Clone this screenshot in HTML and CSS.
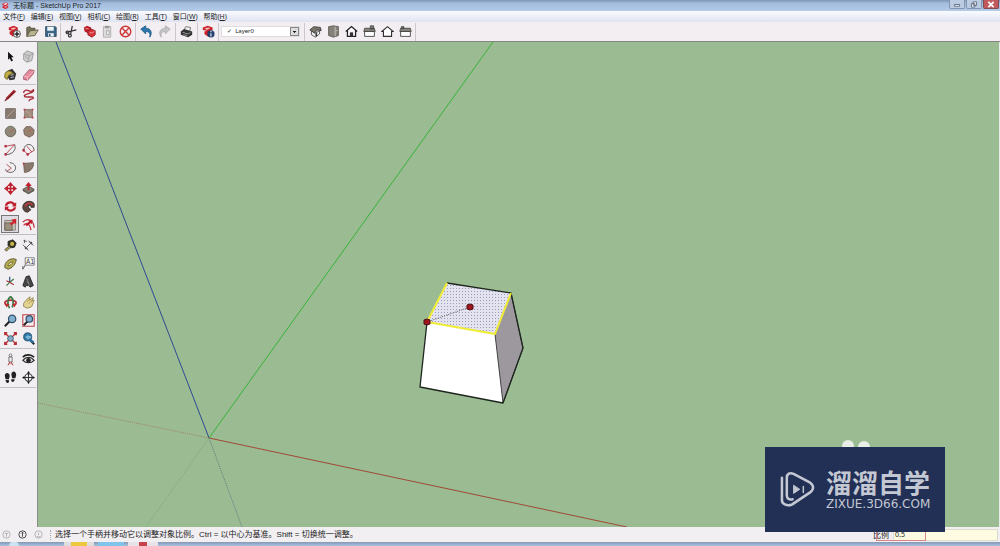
FILE: index.html
```html
<!DOCTYPE html>
<html lang="zh-CN">
<head>
<meta charset="utf-8">
<title>无标题 - SketchUp Pro 2017</title>
<link rel="stylesheet" href="styles.css">
</head>
<body>
<div class="app">
  <header class="titlebar">
    <svg class="app-icon" viewBox="0 0 16 16"><path d="M1 4l7-3 6 2v3l-5 2 5 1v4l-6 3-7-3v-3l4-1-4-2z" fill="#d3202c"/><path d="M4 5l5-2 3 1-5 2zM5 11l4 1 3-1" fill="#fff" stroke="#fff"/></svg>
    <h1 class="title">无标题 - SketchUp Pro 2017</h1>
    <div class="window-buttons">
      <button class="win" aria-label="最小化"><svg viewBox="0 0 16 8"><path d="M5 4h6v2H5z" fill="#fff" stroke="#56647a"/></svg></button>
      <button class="win" aria-label="还原"><svg viewBox="0 0 16 8"><path d="M7 1h4v4H7zM5 3h4v4H5z" fill="#fff" stroke="#56647a"/></svg></button>
      <button class="win win-close" aria-label="关闭"><svg viewBox="0 0 16 8"><path d="M5 1l6 6M11 1L5 7" stroke="#fff" stroke-width="2"/></svg></button>
    </div>
  </header>
  <nav class="menubar">
    <button class="menu">文件(<u>F</u>)</button><button class="menu">编辑(<u>E</u>)</button><button class="menu">视图(<u>V</u>)</button><button class="menu">相机(<u>C</u>)</button><button class="menu">绘图(<u>R</u>)</button><button class="menu">工具(<u>T</u>)</button><button class="menu">窗口(<u>W</u>)</button><button class="menu">帮助(<u>H</u>)</button>
  </nav>
  <div class="toolbar">
    <div class="group">
      <button class="tool" aria-label="新建"><svg viewBox="0 0 16 16"><path d="M1 3l6-2 5 2v3l-3 1v6l-3 1-4-3V8l3-1-4-1z" fill="#c9222b"/><path d="M3 4l5-1 2 1-4 2z" fill="#f3b9b4"/><circle cx="11" cy="11" r="4.3" fill="#fff" stroke="#333"/><path d="M11 8v6M8 11h6" stroke="#222" stroke-width="1.8"/></svg></button>
      <button class="tool" aria-label="打开"><svg viewBox="0 0 16 16"><path d="M1 14V3l4-1 1 2h5v3" fill="#77735a" stroke="#4d4b3c"/><path d="M1 14l4-7 10-1-4 7z" fill="#b8b48f" stroke="#55533f"/></svg></button>
      <button class="tool" aria-label="保存"><svg viewBox="0 0 16 16"><path d="M2 2h12l1 1v11H2z" fill="#3c6788" stroke="#24425e"/><path d="M4 2h8v5H4zM5 10h7v4H5z" fill="#eef3f6"/><path d="M6 11h2v3H6z" fill="#355a76"/></svg></button>
    </div>
    <div class="group">
      <button class="tool" aria-label="剪切"><svg viewBox="0 0 16 16" fill="none" stroke="#333" stroke-width="1.5"><path d="M9 1L7 11M1 9l13-3"/><circle cx="6" cy="13" r="1.8"/><circle cx="3" cy="9" r="1.6"/></svg></button>
      <button class="tool" aria-label="复制"><svg viewBox="0 0 16 16"><path d="M1 3l4-2 5 2v3l-2 2-2 2-4-2z" fill="#b91f28"/><path d="M6 8l4-3 5 2v5l-4 3-5-3z" fill="#d7303a" stroke="#8d1620"/><path d="M3 4l4 1M8 9l3 1 3-2" stroke="#f4b2ad" fill="none"/></svg></button>
      <button class="tool" aria-label="粘贴"><svg viewBox="0 0 16 16"><path d="M3 2h9v13H3z" fill="#ddd" stroke="#aaa"/><path d="M5 1h5v3H5z" fill="#999"/><path d="M7 7h3v5H7z" fill="#fff" stroke="#999"/></svg></button>
      <button class="tool" aria-label="删除"><svg viewBox="0 0 16 16" fill="none" stroke="#cd3434" stroke-width="1.7"><circle cx="8" cy="8" r="6.5"/><path d="M4 4l8 8M12 4l-8 8"/></svg></button>
    </div>
    <div class="group group-wide">
      <button class="tool" aria-label="撤销"><svg viewBox="0 0 16 16"><path d="M1 5l6-4v3c6 0 9 5 5 11 1-5-1-7-5-7v3z" fill="#2d77ad" stroke="#1e557e"/></svg></button>
      <button class="tool" aria-label="重做"><svg viewBox="0 0 16 16"><path d="M15 5L9 1v3C3 4 0 9 4 15c-1-5 1-7 5-7v3z" fill="#c5c5c7" stroke="#aaa"/></svg></button>
    </div>
    <div class="group group-wide">
      <button class="tool" aria-label="打印"><svg viewBox="0 0 16 16"><path d="M5 6l2-4 6 1-1 5z" fill="#eee" stroke="#666"/><path d="M1 8l4-3 10 3v4l-5 3-9-3z" fill="#333"/><path d="M3 9l7 2 3-2M4 12l5 1" stroke="#aaa" fill="none"/></svg></button>
    </div>
    <div class="group">
      <button class="tool" aria-label="模型信息"><svg viewBox="0 0 16 16"><path d="M1 3l6-2 6 2v3l-3 1v6l-3 1-4-3V8l3-1-5-1z" fill="#c9222b"/><path d="M3 4l5-1 2 1-4 2z" fill="#f3b9b4"/><circle cx="11" cy="11" r="4.4" fill="#243f6b"/><path d="M11 10v4M11 7.5v1.5" stroke="#fff" stroke-width="1.3"/></svg></button>
    </div>
    <div class="group">
      <select class="layer" aria-label="图层"><option>✓ &nbsp;Layer0</option></select>
    </div>
    <div class="group group-views">
      <button class="tool" aria-label="等轴"><svg viewBox="0 0 16 16"><path d="M3 7l5 3 5-3v4l-5 4-5-3z" fill="#eee" stroke="#444"/><path d="M1 6l5-4 8 1 1 4-5-1-3 4z" fill="#77746a" stroke="#333"/><path d="M9 10v4" stroke="#333" stroke-width="2"/></svg></button>
      <button class="tool" aria-label="俯视"><svg viewBox="0 0 16 16"><path d="M2 2l6-1 6 1v11l-6 2-6-2z" fill="#85827a" stroke="#55534c"/><path d="M10 2v12M11 7h2" stroke="#ccc"/></svg></button>
      <button class="tool" aria-label="前视"><svg viewBox="0 0 16 16"><path d="M1 8l7-6 7 6M3 7v7h10V7" fill="#fff" stroke="#222" stroke-width="1.6"/><path d="M6 9h4v5H6z" fill="#333"/></svg></button>
      <button class="tool" aria-label="右视"><svg viewBox="0 0 16 16"><path d="M2 8h12v6H2z" fill="#fff" stroke="#333"/><path d="M2 4h12l1 4H1zM9 1h4v4H9z" fill="#85827a" stroke="#444"/></svg></button>
      <button class="tool" aria-label="后视"><svg viewBox="0 0 16 16"><path d="M1 8l7-6 7 6h-2v6H3V8z" fill="#fff" stroke="#333" stroke-width="1.4"/></svg></button>
      <button class="tool" aria-label="左视"><svg viewBox="0 0 16 16"><path d="M2 8h12v6H2z" fill="#fff" stroke="#333"/><path d="M2 4h12l1 4H1zM3 2h3v2H3z" fill="#85827a" stroke="#444"/></svg></button>
    </div>
  </div>
  <main class="workspace">
    <aside class="palette">
      <div class="tools">
        <button class="tool" aria-label="选择"><svg viewBox="0 0 16 16"><path d="M5 2v10l2-2 2 4 2-1-2-4h3z" fill="#111"/></svg></button>
        <button class="tool" aria-label="制作组件"><svg viewBox="0 0 16 16"><path d="M2 5l4-4 8 3-2 9-6 2-4-3z" fill="#ccc" stroke="#909090"/><path d="M2 5l7 2 5-3M9 7l-2 8M4 8l3 2" fill="none" stroke="#999"/></svg></button>
        <button class="tool" aria-label="材质"><svg viewBox="0 0 16 16"><path d="M5 3l5-2 5 6-2 7-6 1-4-6z" fill="#333"/><path d="M1 12C0 5 4 3 8 4l4 3C7 7 5 9 4 14z" fill="#c2ae45" stroke="#665c20"/><path d="M8 9l4-1M8 12l4-1" stroke="#aab" stroke-width="1.5"/></svg></button>
        <button class="tool" aria-label="擦除"><svg viewBox="0 0 16 16"><path d="M2 10L9 2l6 1-1 4-7 8-5-1z" fill="#e48a9c" stroke="#a05064"/><path d="M2 10l5 1 8-8M7 11v4" fill="none" stroke="#f6c5ce"/></svg></button>
      </div>
      <div class="tools">
        <button class="tool" aria-label="直线"><svg viewBox="0 0 16 16"><path d="M1 15l2-5 9-9 3 2-9 9z" fill="#a92b32"/><path d="M4 12l9-9M1 15l2-3" stroke="#4b1519"/></svg></button>
        <button class="tool" aria-label="手绘线"><svg viewBox="0 0 16 16"><path d="M2 5c0-4 4-4 6-3s5 1 6-1c2 4-9 4-11 7-1 4 11 0 11 3 0 2-6 1-5 4" fill="none" stroke="#a62a34" stroke-width="1.7"/></svg></button>
        <button class="tool" aria-label="矩形"><svg viewBox="0 0 16 16"><path d="M2 2h12v12H2z" fill="#897a70" stroke="#6a625c"/><path d="M3 13L13 3" stroke="#c9a9a2"/></svg></button>
        <button class="tool" aria-label="旋转矩形"><svg viewBox="0 0 16 16"><path d="M3 3h10v10H3z" fill="#a08b7c" stroke="#82756b"/><path d="M2 2h2v2H2zM12 2h2v2h-2zM2 12h2v2H2zM12 12h2v2h-2z" fill="#bf3540"/><path d="M4 6c4-1 6 2 6 6" fill="none" stroke="#c8aaa0"/></svg></button>
        <button class="tool" aria-label="圆"><svg viewBox="0 0 16 16"><circle cx="8" cy="8" r="6.5" fill="#908677" stroke="#5d6050"/><path d="M8 8l4-2" stroke="#bd5a55"/></svg></button>
        <button class="tool" aria-label="多边形"><svg viewBox="0 0 16 16"><path d="M5 2h6l4 4-1 6-5 3-6-3-1-6z" fill="#96816f" stroke="#715d52"/><path d="M8 8l4-2" stroke="#bd5a55"/></svg></button>
        <button class="tool" aria-label="圆弧"><svg viewBox="0 0 16 16" fill="none" stroke="#b02f3a"><path d="M2 4l11-2M2 14l11-12"/><path d="M13 2c3 6-3 13-11 12" stroke="#444"/><path d="M1 3h2v2H1zM1 13h2v2H1z" fill="#b02f3a"/></svg></button>
        <button class="tool" aria-label="两点圆弧"><svg viewBox="0 0 16 16" fill="none" stroke="#444"><path d="M2 9c1-10 12-9 13 0"/><path d="M2 9l5 5 8-5M6 4l6 7" stroke="#b02f3a"/><path d="M1 8h2v2H1zM6 13h2v2H6z" fill="#b02f3a" stroke="#b02f3a"/></svg></button>
        <button class="tool" aria-label="三点圆弧"><svg viewBox="0 0 16 16" fill="none" stroke="#444"><path d="M7 2c10 1 9 12 1 12-4 0-6-2-6-4"/><path d="M3 4l6 5-6 4" stroke="#b02f3a"/></svg></button>
        <button class="tool" aria-label="扇形"><svg viewBox="0 0 16 16"><path d="M2 3l12-1c1 6-4 12-11 12z" fill="#8b7a6b" stroke="#665b50"/><path d="M1 2h2v2H1z" fill="#b02f3a"/></svg></button>
      </div>
      <div class="tools">
        <button class="tool" aria-label="移动"><svg viewBox="0 0 16 16"><path d="M8 0l4 5H9v2h2V4l5 4-5 4V9H9v2h3l-4 5-4-5h3V9H5v3L0 8l5-4v3h2V5H4z" fill="#bf202d"/></svg></button>
        <button class="tool" aria-label="推拉"><svg viewBox="0 0 16 16"><path d="M1 9l7-4 7 4-7 5z" fill="#887d70" stroke="#504a43"/><path d="M1 9v2l7 4 7-4V9l-7 5z" fill="#5c564f"/><path d="M8 0l4 5H9v5H7V5H4z" fill="#c3202d"/></svg></button>
        <button class="tool" aria-label="旋转"><svg viewBox="0 0 16 16"><path d="M1 7c1-6 9-7 12-3l2-1v5h-5l1-2C9 3 5 4 4 7zM15 9c-1 6-9 7-12 3l-2 1V8h5l-1 2c2 3 6 2 7-1z" fill="#bf202d"/></svg></button>
        <button class="tool" aria-label="路径跟随"><svg viewBox="0 0 16 16"><path d="M1 9C1 0 14 0 15 5v4h-4V7c-2-1-4 1-3 2l3 3-4 3c-4 0-6-3-6-6z" fill="#5b4640" stroke="#382c29"/><path d="M4 8c1-5 7-5 9-2" fill="none" stroke="#bb3940" stroke-width="2"/></svg></button>
        <button class="tool tool-active" aria-label="缩放" aria-pressed="true"><svg viewBox="0 0 16 16"><path d="M1 3h13v12H1z" fill="#c9c3b4" stroke="#777"/><path d="M1 6h9v9H1z" fill="#9c907e" stroke="#665d50"/><path d="M15 1v7l-2-2-4 3-2-2 4-3-2-2z" fill="#cf222d"/></svg></button>
        <button class="tool" aria-label="偏移"><svg viewBox="0 0 16 16"><path d="M1 5c6-6 13-3 14 7M2 9c3-4 8-2 9 6" fill="none" stroke="#bf2d36" stroke-width="1.5"/><path d="M13 2l-6 1 2 1-5 4 2 2 5-4 1 2z" fill="#bf202d"/></svg></button>
      </div>
      <div class="tools">
        <button class="tool" aria-label="卷尺"><svg viewBox="0 0 16 16"><path d="M5 3l6-2 4 4-2 5-5 1-3-3z" fill="#363525" stroke="#222"/><circle cx="10" cy="6" r="2.5" fill="#c7b848"/><path d="M6 9l-5 4 2 2 5-5" fill="#b3a548" stroke="#444"/></svg></button>
        <button class="tool" aria-label="尺寸"><svg viewBox="0 0 16 16" fill="none" stroke="#444"><path d="M4 12l8-8M1 7l7 7M8 2l6 6M2 2l4 1M3 1v4"/><path d="M4 9v3h3M9 4h3v3"/></svg></button>
        <button class="tool" aria-label="量角器"><svg viewBox="0 0 16 16"><path d="M1 13C0 6 8 0 15 3c0 5-5 11-10 12z" fill="#b5ab52" stroke="#4e4a25"/><path d="M5 11c0-3 3-5 6-5-1 3-3 4-6 5z" fill="#eee8b0" stroke="#666030"/></svg></button>
        <button class="tool" aria-label="文字"><svg viewBox="0 0 16 16"><path d="M4 1h11v9H4z" fill="#fff" stroke="#666"/><path d="M4 10l-3 5v-4" fill="none" stroke="#444"/><text x="5" y="9" class="glyph">A1</text></svg></button>
        <button class="tool" aria-label="轴"><svg viewBox="0 0 16 16" fill="none"><path d="M7 9V2" stroke="#345588" stroke-width="1.5"/><path d="M7 9l5-4M7 9l-4 4" stroke="#367c42" stroke-width="1.5"/><path d="M7 9l5 3M7 9L3 7" stroke="#a83538" stroke-width="1.5"/></svg></button>
        <button class="tool" aria-label="三维文字"><svg viewBox="0 0 16 16"><path d="M5 2l4-1 5 12-4 2-2-2H5l-1 2-3-2z" fill="#454545" stroke="#222"/><path d="M6 4l3 9M6 9h3" stroke="#888"/></svg></button>
      </div>
      <div class="tools">
        <button class="tool" aria-label="环绕观察"><svg viewBox="0 0 16 16" fill="none"><path d="M3 11C-1 8 2 5 8 5s9 3 5 6" stroke="#bf3035" stroke-width="2.2"/><path d="M7 15C4 12 4 3 8 1c4 2 4 9 2 13" stroke="#3c7947" stroke-width="2.2"/><path d="M1 9l6 1-4 4zM15 9l-5 1 3 4z" fill="#bf3035"/></svg></button>
        <button class="tool" aria-label="平移"><svg viewBox="0 0 16 16"><path d="M2 9l4-5 4-3-1 4 5-3-2 4 3-1-3 8-5 2-5-2z" fill="#e4d491" stroke="#8b7f48"/><path d="M6 7l4-3M8 9l5-3" stroke="#a99954"/></svg></button>
        <button class="tool" aria-label="缩放视图"><svg viewBox="0 0 16 16"><path d="M7 9l-6 6" stroke="#222" stroke-width="2.5"/><circle cx="10" cy="6" r="4.5" fill="#80afd0" stroke="#344e68" stroke-width="1.5"/></svg></button>
        <button class="tool" aria-label="缩放窗口"><svg viewBox="0 0 16 16"><path d="M1 1h14v14H1z" fill="none" stroke="#c34248" stroke-width="1.3"/><path d="M7 9l-5 5" stroke="#222" stroke-width="2.5"/><circle cx="9" cy="6" r="4" fill="#80afd0" stroke="#344e68" stroke-width="1.5"/></svg></button>
        <button class="tool" aria-label="充满视窗"><svg viewBox="0 0 16 16"><path d="M1 1l5 5M15 1l-5 5M1 15l5-5M15 15l-5-5M1 4V1h3M12 1h3v3M1 12v3h3M12 15h3v-3" fill="none" stroke="#b92731" stroke-width="1.7"/><circle cx="8" cy="8" r="3.5" fill="#82aac4" stroke="#344e68"/></svg></button>
        <button class="tool" aria-label="上一个"><svg viewBox="0 0 16 16"><path d="M9 9l6 6" stroke="#222" stroke-width="2.5"/><circle cx="7" cy="6" r="5" fill="#2f75a5" stroke="#24506f"/><path d="M4 6l4-3v2h3v3H8v2z" fill="#7bb4d6"/><path d="M9 9l5 4" stroke="#2970a1" stroke-width="3"/></svg></button>
      </div>
      <div class="tools">
        <button class="tool" aria-label="定位相机"><svg viewBox="0 0 16 16"><circle cx="8" cy="3" r="1.7" fill="#fff" stroke="#555"/><path d="M6 5h4v6H6z" fill="#eee" stroke="#666"/><path d="M7 11l-2 4M9 11l2 4M5 15l3-3 3 3" stroke="#b73a3e" fill="none"/></svg></button>
        <button class="tool" aria-label="绕轴旋转"><svg viewBox="0 0 16 16"><path d="M1 5c4-4 10-3 14 0" fill="none" stroke="#222" stroke-width="2"/><path d="M1 9c4-5 10-5 14 0-4 4-10 4-14 0z" fill="#ddd" stroke="#222" stroke-width="1.3"/><circle cx="8" cy="9" r="2.8" fill="#222"/></svg></button>
        <button class="tool" aria-label="漫游"><svg viewBox="0 0 16 16"><path d="M1 6c0-5 6-4 6 0l-1 4H2zM2 11h4c1 5-4 5-4 0zM9 4c1-5 6-4 6 1l-1 4h-4zM9 10h4c0 5-5 4-4 0z" fill="#222"/></svg></button>
        <button class="tool" aria-label="剖切面"><svg viewBox="0 0 16 16"><circle cx="8" cy="8" r="4.5" fill="none" stroke="#333" stroke-width="1.3"/><path d="M8 1v14M1 8h14" stroke="#333" stroke-width="1.3"/><path d="M8 0l2 3H6zM8 16l2-3H6zM0 8l3-2v4zM16 8l-3-2v4z" fill="#222"/></svg></button>
      </div>
    </aside>
    <section class="viewport">
      <svg class="scene" viewBox="38 42 962 485" preserveAspectRatio="xMinYMin slice" role="img" aria-label="三维模型">
        <defs>
          <pattern id="dots" width="3" height="3" patternUnits="userSpaceOnUse"><rect width="3" height="3" fill="#e3e2ef"/><rect width="1" height="1" fill="#9c9cbc"/></pattern>
        </defs>
        <g fill="none">
          <path d="M56 42L209 438" stroke="#2f4a91"/>
          <path d="M493 42L209 438" stroke="#38b238"/>
          <path d="M209 438L627 527" stroke="#a04a34"/>
          <path d="M38 403L209 438" stroke="#9d8764" stroke-dasharray="1 1"/>
          <path d="M209 438L146 527" stroke="#7cab70" stroke-dasharray="1 1"/>
          <path d="M209 438L242 527" stroke="#5c7d80" stroke-dasharray="1 1"/>
        </g>
        <g stroke-linejoin="round">
          <path d="M427 322L495 334L503 403L420 387Z" fill="#fff"/>
          <path d="M495 334L511 293L523 348L503 403Z" fill="#9c989e" stroke="#444"/>
          <path d="M447 283L511 293L495 334L427 322Z" fill="url(#dots)"/>
          <path d="M427 322L420 387L503 403L523 348L511 293L447 283" fill="none" stroke="#1e261e" stroke-width="1.3"/>
          <path d="M447 283L427 322L495 334L511 293" fill="none" stroke="#f0ec35" stroke-width="2"/>
          <path d="M427 322L470 307" stroke="#666" stroke-dasharray="1 1"/>
        </g>
        <g fill="#a01620" stroke="#4f1015"><path d="M424 320l3-1 3 1v4l-3 1-3-1zM467 305l3-1 3 1v4l-3 1-3-1z"/></g>
        <g fill="#e9eee6"><circle cx="848" cy="446" r="6"/><circle cx="864" cy="447" r="6"/></g>
      </svg>
    </section>
  </main>
  <footer class="statusbar">
    <div class="hints">
      <svg class="status-icon status-dim" viewBox="0 0 16 16"><circle cx="8" cy="8" r="6.5"/><path d="M5 6h6M8 6v6"/></svg>
      <svg class="status-icon" viewBox="0 0 16 16"><circle cx="8" cy="8" r="6.5"/><path d="M8 4v8M6 6l2-2 2 2"/></svg>
      <svg class="status-icon status-dim" viewBox="0 0 16 16"><circle cx="8" cy="8" r="6.5"/><path d="M5 12h6M8 5v4"/></svg>
      <p class="message">选择一个手柄并移动它以调整对象比例。Ctrl = 以中心为基准。Shift = 切换统一调整。</p>
    </div>
    <div class="measure">
      <label class="measure-label" for="scale">比例</label>
      <input class="measure-input" id="scale" type="text" value="0.5">
      <span class="highlight"></span>
    </div>
  </footer>
  <div class="taskbar">
    <span class="task task-start"></span><span class="task task-yellow"></span><span class="task task-blue"></span><span class="task task-red"></span>
  </div>
  <div class="watermark">
    <svg class="watermark-logo" viewBox="0 0 36 38" fill="none" stroke="#c3c8d2" stroke-width="2.6" stroke-linecap="round"><path d="M2 7v23c0 4 5 6 9 5"/><path d="M13 29c-4 1-6-1-6-4V7c0-4 3-6 7-4l17 9c4 3 4 7 0 10L13 34c-1 1-2 1-3 1"/><path d="M14 15v8l6-4z" fill="#c3c8d2" stroke-width="1"/><path d="M24 16v6" stroke-width="1.5"/></svg>
    <div class="watermark-text"><strong class="brand">溜溜自学</strong><span class="site">ZIXUE.3D66.COM</span></div>
  </div>
</div>
</body>
</html>
```
FILE: styles.css
```css
* { box-sizing: border-box; }
body { margin: 0; font-family: "Noto Sans", "Noto Sans CJK SC", sans-serif; font-size: 7px; color: #222; }
button { margin: 0; padding: 0; border: 0; background: none; font: inherit; color: inherit; }
svg { display: block; }
.app { position: relative; display: flex; flex-direction: column; height: 100vh; overflow: hidden; background: #f1eff1; }

.titlebar { display: flex; align-items: center; height: 11px; padding-left: 2px; gap: 4px; background: linear-gradient(#8095b5, #a3bcde 30%, #b4cbe8); }
.app-icon { width: 7px; height: 7px; }
.title { flex: 1; margin: 0; font: 400 7px/10px "Liberation Sans", "Noto Sans CJK SC", sans-serif; }
.window-buttons { display: flex; align-self: flex-start; gap: 1px; padding-right: 1px; }
.win { display: grid; place-items: center; width: 16px; height: 9px; border: 1px solid #8394af; border-top: 0; border-radius: 0 0 2px 2px; background: #bccde3; }
.win svg { width: 14px; height: 7px; }
.win-close { background: #c05a5c; border-color: #874950; }

.menubar { display: flex; gap: 6px; height: 11px; padding-left: 3px; background: linear-gradient(#fafbfe, #dfe3f2); }
.menu { min-width: 20px; line-height: 10px; white-space: nowrap; }

.toolbar { display: flex; align-items: center; height: 20px; padding-left: 5px; border-bottom: 1px solid #858585; background: #f2eef1; }
.group { display: flex; align-items: center; height: 18px; margin-right: 1px; padding-right: 1px; border-right: 1px solid #cbc7cc; }
.group-wide { padding-right: 2px; }
.tool { display: grid; place-items: center; width: 18px; height: 18px; }
.tool svg { width: 13px; height: 13px; }
.layer { width: 79px; height: 11px; margin: 0 3px 0 1px; padding: 0 14px 0 5px; border: 1px solid #ddd; border-radius: 0; appearance: none; font: 6px/9px "Noto Sans", "DejaVu Sans", sans-serif; color: #222;
  background:
    linear-gradient(#222, #222) right 3px top 4px / 3px 1px no-repeat,
    linear-gradient(#222, #222) right 4px top 5px / 1px 1px no-repeat,
    linear-gradient(#dcdcdc, #dcdcdc) right 1px top 1px / 7px 7px no-repeat,
    linear-gradient(#888, #888) right 0 top 0 / 9px 9px no-repeat,
    #fff; }

.workspace { flex: 1; display: flex; min-height: 0; }
.palette { width: 38px; padding: 5px 1px 0 0; border-right: 1px solid #8c8c8c; background: #f1eff2; }
.tools { display: grid; grid-template-columns: 18px 18px; padding-bottom: 1px; margin-bottom: 1px; padding-left: 1px; border-bottom: 1px solid #c2c0c4; }
.tool-active { border: 1px solid #777; background: #dedce0; }
.glyph { font: 8px "Liberation Sans", sans-serif; fill: #333; }
.viewport { flex: 1; min-width: 0; border-right: 1px solid #e8ece8; background: #9bbb93; }
.scene { width: 100%; height: 100%; }

.statusbar { display: flex; align-items: center; justify-content: space-between; height: 15px; background: #f1eff2; }
.hints { display: flex; align-items: center; gap: 7px; padding-left: 2px; }
.status-icon { width: 9px; height: 9px; fill: none; stroke: #333; stroke-width: 1.5; }
.status-dim { stroke: #aaa; }
.message { margin: 0; padding-left: 4px; border-left: 1px dotted #aaa; font: 8px/10px "Liberation Sans", "Noto Sans CJK SC", sans-serif; white-space: nowrap; }
.measure { position: relative; display: flex; align-items: center; gap: 4px; height: 13px; padding-right: 2px; }
.measure-label { font-size: 8px; }
.measure-input { width: 105px; height: 12px; padding: 0 1px; border: 1px solid #dcdccb; background: #fdfce2; font: 7px "Noto Sans", sans-serif; color: #222; }
.highlight { position: absolute; left: 3px; bottom: 0; width: 50px; height: 12px; border: 1px solid #d98684; border-top: 0; }

.taskbar { display: flex; align-items: stretch; gap: 4px; height: 4px; padding-left: 8px; background: linear-gradient(#8498b4, #a9c0dd); }
.task { width: 26px; }
.task-start { width: 52px; background: radial-gradient(circle at 6px 4px, #cde3f2 4px, transparent 6px); }
.task-yellow { width: 30px; border: solid #ddd; border-width: 0 7px; background: #edc83f; }
.task-blue { background: #80c4ec; }
.task-red { width: 30px; border: solid #e6e2e8; border-width: 0 11px; background: #c5434b; }

.watermark { position: absolute; right: 55px; bottom: 14px; display: flex; align-items: center; gap: 11px; width: 180px; height: 85px; padding-left: 15px; background: #223056; color: #c3c8d2; }
.watermark-logo { width: 35px; height: 37px; }
.watermark-text { display: flex; flex-direction: column; }
.brand { font: 700 26px/28px "Noto Sans CJK SC", sans-serif; }
.site { font: 12px/16px "DejaVu Sans", sans-serif; }
```
